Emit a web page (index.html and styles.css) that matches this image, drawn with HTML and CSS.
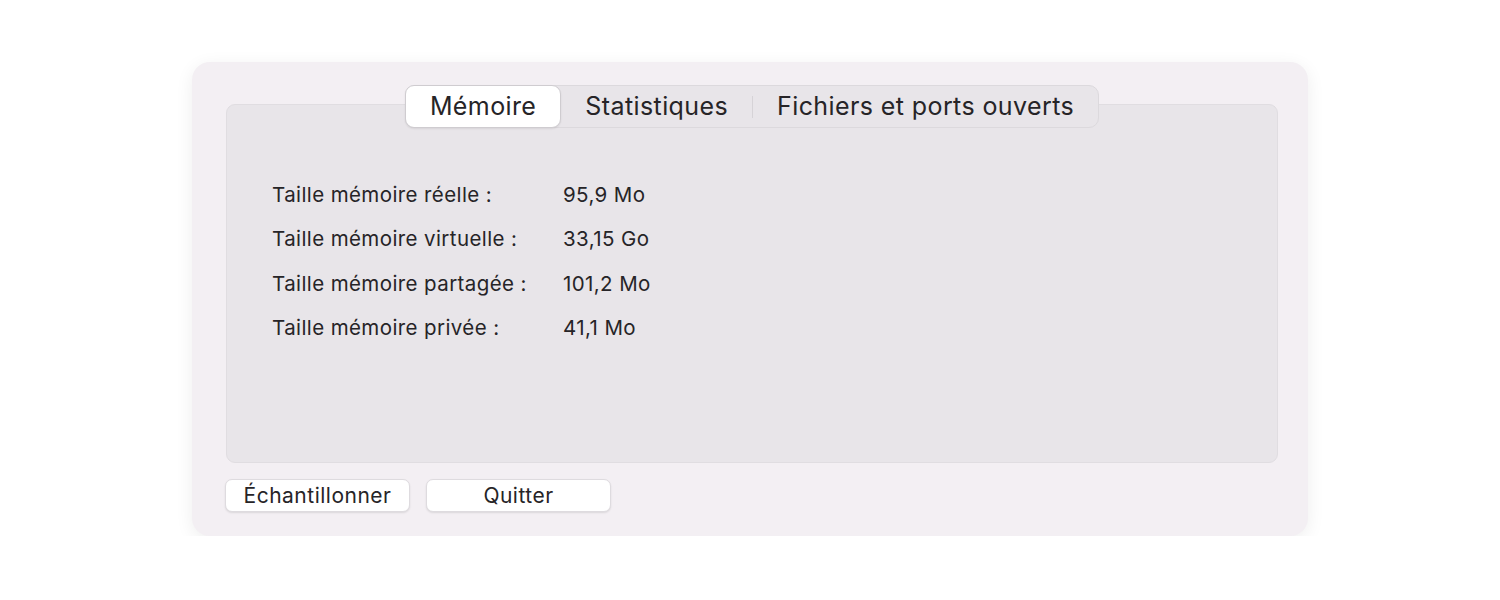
FILE: index.html
```html
<!DOCTYPE html>
<html>

<head>
	<title>Moniteur d'activité</title>
	<meta charset="UTF-8" />

	<link rel="stylesheet" href="styles.css">
</head>

<body>

<div class="window">
	<div class="tabs-wrap">
		<div class="tabs">
			<span class="tab selected">Mémoire</span>
			<span class="tab">Statistiques</span>
			<span class="sep"></span>
			<span class="tab">Fichiers et ports ouverts</span>
		</div>

		<div class="panel">
			<div class="rows">
				<span class="label">Taille mémoire réelle :</span>
				<span class="value">95,9 Mo</span>

				<span class="label">Taille mémoire virtuelle :</span>
				<span class="value">33,15 Go</span>

				<span class="label">Taille mémoire partagée :</span>
				<span class="value">101,2 Mo</span>

				<span class="label">Taille mémoire privée :</span>
				<span class="value">41,1 Mo</span>
			</div>
		</div>
	</div>

	<div class="buttons">
		<button class="btn">Échantillonner</button>
		<button class="btn">Quitter</button>
	</div>
</div>

</body>

</html>
```

FILE: styles.css
```css
body {
  margin: 0;
  background: #fff;
  font-family: Inter, "Noto Sans", sans-serif;
  color: #262427;
}

.window {
  box-sizing: border-box;
  width: 1116px;
  height: 474px;
  margin: 62px auto 0;
  padding: 23px 30px 0 34px;
  background: #f3eff3;
  border-radius: 18px;
  box-shadow: 0 4px 18px rgba(0, 0, 0, 0.07);
}

.tabs-wrap {
  display: flex;
  flex-direction: column;
}

.tabs {
  position: relative;
  z-index: 1;
  align-self: center;
  display: flex;
  align-items: center;
  height: 43px;
  margin-bottom: -24px;
  box-sizing: border-box;
  background: #e8e5e9;
  border: 1px solid #dcd9dd;
  border-radius: 10px;
  font-size: 25px;
  letter-spacing: 0.4px;
}

.tab {
  padding: 0 24px;
  line-height: 41px;
}

.tab.selected {
  background: #fff;
  border-radius: 9px;
  margin: -1px 0 -1px -1px;
  line-height: 41px;
  border: 1px solid #cfccd0;
  box-shadow: 0 1px 2px rgba(0, 0, 0, 0.08);
}

.sep {
  width: 1px;
  height: 22px;
  background: #d6d3d7;
}

.panel {
  box-sizing: border-box;
  height: 359px;
  padding: 67px 45px 0;
  background: #e8e5e9;
  border: 1px solid #e0dde1;
  border-radius: 9px;
}

.rows {
  display: grid;
  grid-template-columns: 291px auto;
  grid-auto-rows: 44.5px;
  align-items: center;
  font-size: 20.5px;
  letter-spacing: 0.4px;
}

.buttons {
  display: flex;
  gap: 16px;
  margin-top: 16px;
  margin-left: -1px;
}

.btn {
  width: 185px;
  height: 33px;
  padding: 0;
  background: #fff;
  border: 1px solid #dedbdf;
  border-radius: 7px;
  box-shadow: 0 1px 2px rgba(0, 0, 0, 0.1);
  font-family: Inter, "Noto Sans", sans-serif;
  font-size: 21px;
  letter-spacing: 0.5px;
  color: #262427;
}
```
